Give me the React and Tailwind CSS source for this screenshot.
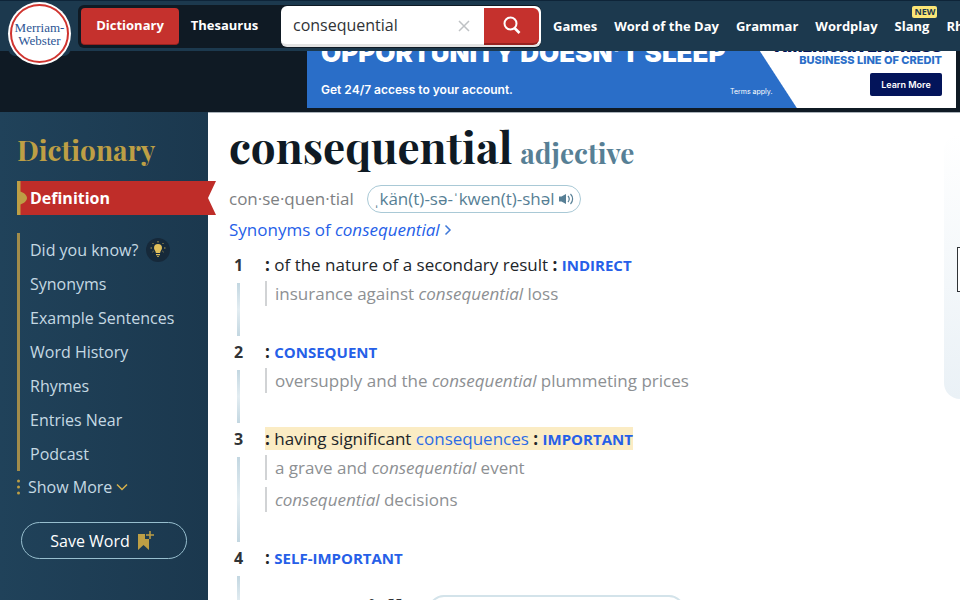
import { useState } from 'react';

const NAV_LINKS = ['Games', 'Word of the Day', 'Grammar', 'Wordplay', 'Slang', 'Rhymes'];

const SIDE_LINKS = [
  'Did you know?',
  'Synonyms',
  'Example Sentences',
  'Word History',
  'Rhymes',
  'Entries Near',
  'Podcast',
];

const SENSES = [
  {
    num: 1,
    text: 'of the nature of a secondary result',
    syn: 'INDIRECT',
    examples: [['insurance against ', 'consequential', ' loss']],
  },
  {
    num: 2,
    syn: 'CONSEQUENT',
    examples: [['oversupply and the ', 'consequential', ' plummeting prices']],
  },
  {
    num: 3,
    text: 'having significant ',
    link: 'consequences',
    syn: 'IMPORTANT',
    marked: true,
    examples: [
      ['a grave and ', 'consequential', ' event'],
      ['', 'consequential', ' decisions'],
    ],
  },
  { num: 4, syn: 'SELF-IMPORTANT', examples: [] },
];

function Logo() {
  return (
    <a href="#home" className="relative z-20 ml-2 h-[55px] w-[63px] shrink-0 self-start rounded-b-lg bg-[#1c394e]">
      <div className="mt-px flex h-[63px] w-[63px] items-center justify-center rounded-full bg-white">
        <div className="flex h-[59px] w-[59px] items-center justify-center rounded-full border-2 border-[#d0342f] text-center font-['Liberation_Serif',serif] text-[13px] leading-[13px] text-[#2c5594]">
          <span>
            Merriam-
            <br />
            Webster
          </span>
        </div>
      </div>
    </a>
  );
}

function SearchBox() {
  const [query, setQuery] = useState('consequential');

  return (
    <form
      onSubmit={(e) => e.preventDefault()}
      className="flex h-[41px] w-[260px] items-stretch rounded-md border-b-3 border-[#e3e3e3] bg-white"
    >
      <input
        aria-label="Search"
        value={query}
        onChange={(e) => setQuery(e.target.value)}
        className="min-w-0 flex-1 pl-3 text-[16px] font-normal text-[#303336] outline-none"
      />
      <button type="button" aria-label="Clear" onClick={() => setQuery('')} className="flex w-10 items-center justify-center pt-[2px]">
        <svg width="12" height="12" viewBox="0 0 12 12" stroke="#bfc2c5" strokeWidth="1.5">
          <path d="M1 1l10 10M11 1L1 11" />
        </svg>
      </button>
      <button
        type="submit"
        aria-label="Search"
        className="my-[2px] mr-[2px] -mb-px flex w-[55px] items-center justify-center rounded-r-md border-b-2 border-[#97211f] bg-[#c5312d]"
      >
        <svg width="18" height="18" viewBox="0 0 18 18" fill="none" stroke="#fff" strokeWidth="2">
          <circle cx="7.5" cy="7.5" r="6" />
          <path d="M11.500 12l5 5" strokeWidth="2.600" />
        </svg>
      </button>
    </form>
  );
}

function Header() {
  return (
    <header className="relative z-10 flex h-[51px] items-center border-t border-[#0e2438] bg-[#1c394e]">
      <Logo />
      <div className="ml-[7px] flex h-[43px] shrink-0 items-center rounded-md bg-[#0f1a24] pl-[3px] text-[13px] font-bold text-white">
        <button className="h-[37px] w-[98px] rounded border-b border-[#97211f] bg-[#c5312d]">Dictionary</button>
        <button className="mr-[11px] w-[91px]">Thesaurus</button>
        <SearchBox />
      </div>
      <nav className="ml-3 flex shrink-0 gap-[17px] pt-px text-[13px] font-bold text-white">
        {NAV_LINKS.map((label) => (
          <a key={label} href="#nav" className="relative whitespace-nowrap">
            {label}
            {label === 'Slang' && (
              <span className="absolute -top-[11px] right-[-8px] rounded-xs bg-[#fbe576] px-[2px] text-[9px] leading-[12px] text-[#1c394e]">
                NEW
              </span>
            )}
          </a>
        ))}
      </nav>
    </header>
  );
}

function AdBanner() {
  return (
    <div className="flex h-[61px] items-end justify-end bg-[#0f1a24] pr-1 pb-1">
      <div className="flex h-[90px] w-[649px] shrink-0 bg-linear-[237deg,#fff_182px,#fff_182px,#2a6ec8_183px] font-['Inter',sans-serif] whitespace-nowrap text-white">
        <div className="flex min-w-0 flex-1 flex-col justify-end pb-2 pl-[14px]">
          <p className="text-[26px] leading-[34px] font-black">OPPORTUNITY DOESN’T SLEEP</p>
          <div className="flex items-end pt-[10px]">
            <p className="w-[409px] shrink-0 text-[12px] leading-5 font-semibold">Get 24/7 access to your account.</p>
            <p className="text-[7px] leading-4">Terms apply.</p>
          </div>
        </div>
        <div className="flex flex-col items-end justify-end pr-[14px] pb-3">
          <p className="text-[16px] leading-[14px] font-black text-[#03145a]">AMERICAN EXPRESS</p>
          <p className="text-[11px] leading-[14px] font-extrabold text-[#2a6ec8]">BUSINESS LINE OF CREDIT</p>
          <button className="mt-[6px] h-[23px] w-[72px] rounded-xs bg-[#03145a] text-[9px] font-semibold text-white">
            Learn More
          </button>
        </div>
      </div>
    </div>
  );
}

function BulbIcon() {
  return (
    <span className="flex size-6 items-center justify-center rounded-full bg-[#16293a]">
      <svg width="16" height="18" viewBox="0 0 16 18">
        <path d="M8 3a4 4 0 0 0-4 4c0 2 1.600 2.600 1.900 5h4.200C10.400 9.600 12 9 12 7a4 4 0 0 0-4-4zM6 13h4v1.200H6zM6.800 15h2.400L8 16.200z" fill="#e0bf5c" />
        <path d="M8 0v1.500M2.500 2l1 1M13.500 2l-1 1M0.500 7H2M14 7h1.500M2.500 11l1-.8M13.500 11l-1-.8" stroke="#e0bf5c" strokeWidth="0.8" />
      </svg>
    </span>
  );
}

function SpeakerIcon() {
  return (
    <svg width="15" height="12" viewBox="0 0 15 12" fill="none" stroke="#577f95" strokeWidth="1.200">
      <path d="M0 3.500h2.500L7 1v10L2.500 8.500H0z" fill="#577f95" stroke="none" />
      <path d="M9 3c1.500 1.800 1.500 4.200 0 6M11.500 1c2.800 2.800 2.800 7.200 0 10" />
    </svg>
  );
}

function Sidebar() {
  return (
    <aside className="w-[208px] shrink-0 bg-linear-to-r from-[#20425a] to-[#1b384e] pl-[17px] text-[16px] text-[#c5d9e3]">
      <h2 className="pt-[21px] font-['Playfair_Display','Liberation_Serif',serif] text-[28px] leading-[34px] font-bold text-[#bd9f45]">
        Dictionary
      </h2>
      <a href="#definition" className="relative mt-[14px] -mr-2 flex h-[34px] items-center pl-[13px] font-bold text-white">
        <svg className="absolute inset-0 size-full" viewBox="0 0 199 34" preserveAspectRatio="none">
          <path d="M0 0h199l-8 17 8 17H0z" fill="#bf2d29" />
          <path d="M0 0h3.500v10.500c2.500 1 6.500 3 6.500 6.500s-4 5.500-6.500 6.500V34H0z" fill="#bd9f45" />
        </svg>
        <span className="relative">Definition</span>
      </a>
      <nav className="mt-[18px] border-l-3 border-[#a18c4b] pl-[10px]">
        {SIDE_LINKS.map((label) => (
          <a key={label} href="#section" className="flex h-[34px] items-center gap-2">
            {label}
            {label === 'Did you know?' && <BulbIcon />}
          </a>
        ))}
      </nav>
      <button className="flex h-8 items-center">
        <svg width="3" height="16" viewBox="0 0 3 16" fill="#bd9f45" className="mr-2">
          <circle cx="1.500" cy="2" r="1.500" />
          <circle cx="1.500" cy="8" r="1.500" />
          <circle cx="1.500" cy="14" r="1.500" />
        </svg>
        Show More
        <svg width="12" height="8" viewBox="0 0 12 8" fill="none" stroke="#d6b14a" strokeWidth="1.500" className="ml-1">
          <path d="M1 1.500l5 5 5-5" />
        </svg>
      </button>
      <button className="mt-[19px] ml-1 flex h-[37px] w-[166px] items-center justify-center gap-2 rounded-full border border-[#97bece] pr-1 text-white">
        Save Word
        <svg width="16" height="20" viewBox="0 0 16 20">
          <path d="M0 3h7v5h4v11l-5.500-5L0 19z" fill="#bd9f45" />
          <path d="M12 0v8M8 4h8" stroke="#bd9f45" strokeWidth="1.500" />
        </svg>
      </button>
    </aside>
  );
}

function Sense({ sense }) {
  return (
    <li className="flex">
      <div className="flex w-[19px] flex-col items-center">
        <span className="h-8 text-[16px] leading-8 font-bold text-[#303336]">{sense.num}</span>
        <span className="mt-[2px] min-h-[52px] w-[3px] flex-1 bg-linear-to-b from-[#c3d7e1] via-[#e3edf2] to-[#c3d7e1]" />
      </div>
      <div className="ml-[17px] pb-[23px]">
        <p className="leading-8 text-[#212529]">
          <span className={sense.marked ? 'bg-[#fbecc4]' : ''}>
            <strong>: </strong>
            {sense.text}
            {sense.link && (
              <a href="#consequences" className="text-[#2b6be4]">
                {sense.link}
              </a>
            )}
            {sense.text && <strong> : </strong>}
            <a href="#synonym" className="text-[15px] font-bold text-[#265fe8]">
              {sense.syn}
            </a>
          </span>
        </p>
        {sense.examples.map(([before, word, after]) => (
          <p key={before} className="mb-[7px] h-[25px] border-l-2 border-[#d1d3d5] pl-2 leading-[25px] text-[#8d9093]">
            {before}
            <em>{word}</em>
            {after}
          </p>
        ))}
      </div>
    </li>
  );
}

function Entry() {
  return (
    <main className="min-w-0 flex-1 pl-[21px] text-[17px] whitespace-nowrap">
      <div className="flex h-[72px] items-baseline gap-2 font-['Playfair_Display','Liberation_Serif',serif] font-bold">
        <h1 className="text-[44px] leading-[66px] text-[#0f1a24]">consequential</h1>
        <h2 className="text-[28px] leading-9 text-[#577f95]">adjective</h2>
      </div>
      <div className="flex h-7 items-center gap-[13px] text-[#7d8082]">
        <span>con·se·quen·tial</span>
        <button className="flex h-7 w-[214px] items-center justify-center gap-1 rounded-full border border-[#a9c9d6] text-[#577f95]">
          ˌkän(t)-sə-ˈkwen(t)-shəl
          <SpeakerIcon />
        </button>
      </div>
      <a href="#synonyms" className="mt-1 flex h-[26px] items-center text-[#265fe8]">
        <span>
          Synonyms of <em>consequential</em>
        </span>
        <svg width="8" height="12" viewBox="0 0 8 12" fill="none" stroke="#3f78d8" strokeWidth="1.500" className="ml-1">
          <path d="M1.500 1.500l4.500 4.500-4.500 4.500" />
        </svg>
      </a>
      <ol className="mt-[6px] h-[346px]">
        {SENSES.map((sense) => (
          <Sense key={sense.num} sense={sense} />
        ))}
      </ol>
      <div className="flex items-start gap-3 pl-3">
        <h3 className="font-['Playfair_Display','Liberation_Serif',serif] text-[24px] leading-[26px] font-bold text-[#303336]">
          consequentially
        </h3>
        <button className="flex h-8 w-[257px] shrink-0 items-center justify-center gap-1 rounded-full border-2 border-[#d3e3ea] text-[#577f95]">
          ˌkän(t)-sə-ˈkwen(t)-sh(ə-)lē
          <SpeakerIcon />
        </button>
      </div>
    </main>
  );
}

export default function App() {
  return (
    <div className="h-screen overflow-hidden bg-white font-['Open_Sans',sans-serif]">
      <Header />
      <AdBanner />
      <div className="flex min-h-[calc(100vh-112px)]">
        <Sidebar />
        <div className="flex min-w-0 flex-1 border-t border-[#abb3ba]">
          <Entry />
          <aside className="mt-[21px] -mr-[316px] h-[265px] w-[332px] shrink-0 rounded-2xl bg-linear-to-b from-white to-[#eaf1f6] pt-[113px] pl-[13px]">
            <div className="h-[45px] w-[300px] border border-[#303336] bg-white" />
          </aside>
        </div>
      </div>
    </div>
  );
}
